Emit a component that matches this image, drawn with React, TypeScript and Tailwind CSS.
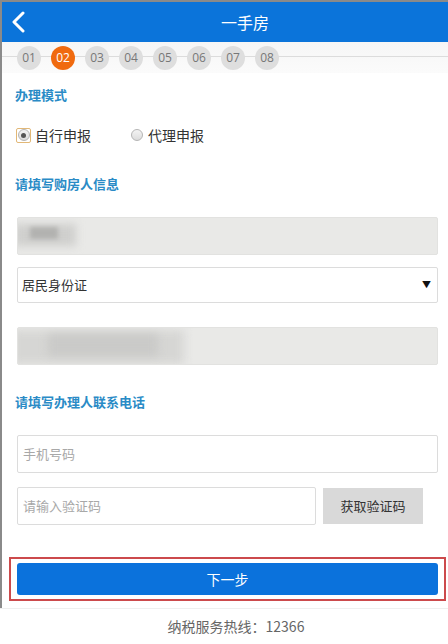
import { useState } from "react";

const steps = ["01", "02", "03", "04", "05", "06", "07", "08"];

function Radio({ checked, label }: { checked: boolean; label: string }) {
  return (
    <label className="flex items-center gap-[4px] text-[14px] leading-[20px] text-[#333]">
      <span
        className={`flex h-[15px] w-[15px] items-center justify-center rounded-[2px] ${
          checked ? "border border-[#e2b877]" : ""
        }`}
      >
        <span className="flex h-[12px] w-[12px] items-center justify-center rounded-full border border-[#b5b5b5] bg-gradient-to-b from-[#f4f4f4] to-[#dcdcdc]">
          {checked && <span className="h-[5px] w-[5px] rounded-full bg-[#555]" />}
        </span>
      </span>
      {label}
    </label>
  );
}

function SectionTitle({ children }: { children: string }) {
  return <h3 className="text-[13px] font-semibold leading-[18px] text-[#2a8bc6]">{children}</h3>;
}

export default function App() {
  const [mode] = useState("self");

  return (
    <div className="h-[644px] w-[448px] overflow-hidden bg-white font-['Noto_Sans_CJK_SC','Liberation_Sans',sans-serif]">
      <div className="h-[608px] border-l-2 border-t-2 border-[#8a8a8a] bg-white">
        {/* 顶部标题 */}
        <div className="relative flex h-[40px] items-center justify-center bg-[#0b74da] pl-[40px]">
          <svg className="absolute left-[8px] top-[9px]" width="16" height="22" viewBox="0 0 16 22">
            <path d="M13 2 L4 11 L13 20" fill="none" stroke="#fff" strokeWidth="3" strokeLinecap="round" strokeLinejoin="round" />
          </svg>
          <span className="text-[16px] text-white">一手房</span>
        </div>

        {/* 步骤 */}
        <div className="relative flex h-[31px] items-center gap-[10px] bg-gradient-to-b from-[#f6f6f6] to-[#fbfbfb] pl-[15px]">
          <div className="absolute left-0 right-0 top-[14px] h-[1px] bg-[#dcdcdc]" />
          {steps.map((s) => (
            <span
              key={s}
              className={`relative flex h-[24px] w-[24px] items-center justify-center rounded-full font-['Open_Sans',sans-serif] text-[12px] ${
                s === "02" ? "bg-[#f06a0f] text-white" : "bg-[#dedede] text-[#777]"
              }`}
            >
              {s}
            </span>
          ))}
        </div>

        <div className="pl-[13px] pr-[10px]">
          <div className="pt-[13px]">
            <SectionTitle>办理模式</SectionTitle>
          </div>
          <div className="mt-[21px] flex items-center gap-[38px] pl-[1px]">
            <Radio checked={mode === "self"} label="自行申报" />
            <Radio checked={mode === "agent"} label="代理申报" />
          </div>

          <div className="mt-[30px]">
            <SectionTitle>请填写购房人信息</SectionTitle>
          </div>

          <div className="ml-[2px] mt-[24px] flex flex-col">
            <div className="relative h-[38px] overflow-hidden rounded-[2px] border border-[#e2e2e0] bg-[#e9e9e7]">
              <div className="absolute left-[-4px] top-[6px] h-[22px] w-[62px] bg-[#cfcfcd] blur-[4px]" />
              <div className="absolute left-[12px] top-[9px] h-[12px] w-[28px] bg-[#b2b2b0] blur-[2px]" />
            </div>

            <div className="mt-[12px] flex h-[36px] items-center justify-between rounded-[2px] border border-[#dcdcdc] bg-white pl-[4px] pr-[6px] text-[13px] text-[#333]">
              <span>居民身份证</span>
              <span className="text-[9px] text-[#111]">▼</span>
            </div>

            <div className="relative mt-[24px] h-[38px] overflow-hidden rounded-[2px] border border-[#e2e2e0] bg-[#e9e9e7]">
              <div className="absolute left-[-6px] top-[2px] h-[34px] w-[172px] bg-[#d6d6d4] blur-[5px]" />
              <div className="absolute left-[30px] top-[6px] h-[22px] w-[110px] bg-[#cacac8] blur-[4px]" />
            </div>
          </div>

          <div className="mt-[28px]">
            <SectionTitle>请填写办理人联系电话</SectionTitle>
          </div>

          <div className="ml-[2px] mt-[24px] flex flex-col">
            <div className="flex h-[38px] items-center rounded-[2px] border border-[#dcdcdc] bg-white pl-[5px] text-[13px] text-[#a8a8a8]">
              手机号码
            </div>
            <div className="mt-[14px] flex items-center gap-[7px]">
              <div className="flex h-[38px] w-[299px] items-center rounded-[2px] border border-[#dcdcdc] bg-white pl-[5px] text-[13px] text-[#a8a8a8]">
                请输入验证码
              </div>
              <button className="h-[36px] w-[100px] bg-[#d9d9d9] text-[13px] text-[#333]">获取验证码</button>
            </div>
          </div>
        </div>

        {/* 下一步 */}
        <div className="ml-[7px] mr-[2px] mt-[32px] border-2 border-[#cc4a4c] px-[6px] py-[4px]">
          <button className="flex h-[32px] w-full items-center justify-center rounded-[3px] bg-[#0b72dc] text-[14px] text-white">
            下一步
          </button>
        </div>
      </div>

      <div className="flex h-[36px] items-center justify-center border-t border-[#efefef] pl-[24px] text-[14px] text-[#666]">
        纳税服务热线：12366
      </div>
    </div>
  );
}
